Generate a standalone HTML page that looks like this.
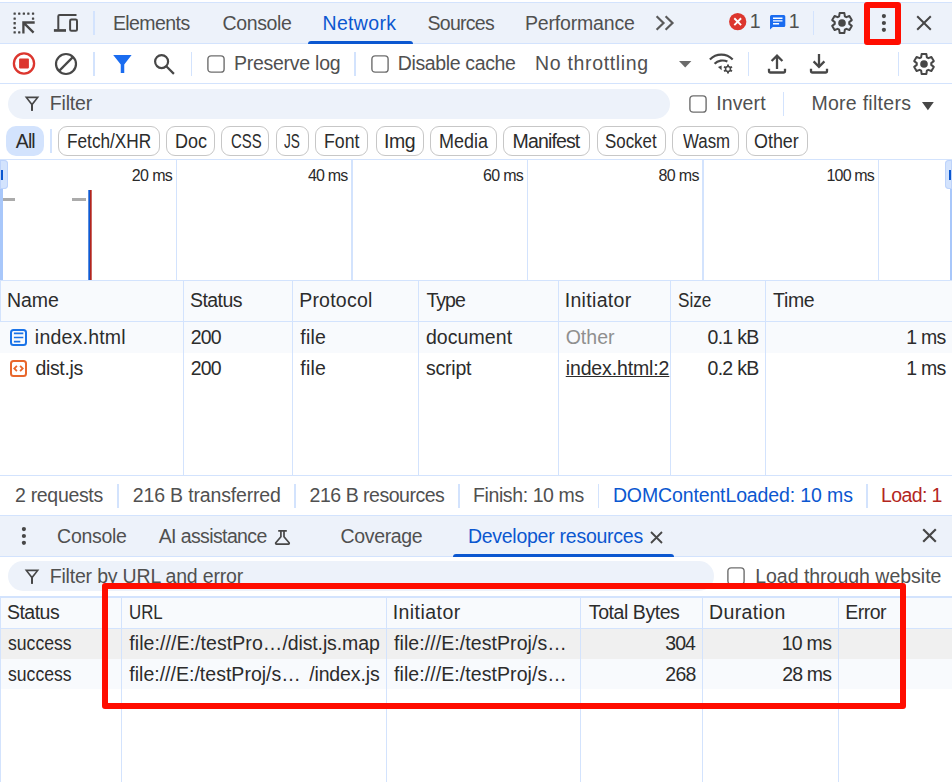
<!DOCTYPE html><html><head><meta charset="utf-8"><title>DevTools</title><style>
html,body{margin:0;padding:0;background:#fff;}
body{width:952px;height:782px;position:relative;overflow:hidden;font-family:"Liberation Sans",sans-serif;font-size:19.500px;color:#505050;}
.a{position:absolute;}
.t{position:absolute;white-space:nowrap;line-height:20px;height:20px;}
.bg{position:absolute;left:0;width:952px;}
.hl{position:absolute;left:0;width:952px;height:1px;background:#d3e3fd;}
.vl{position:absolute;width:1px;background:#d3e3fd;}
.chip{position:absolute;box-sizing:border-box;border:1px solid #c7c7c7;border-radius:9px;top:126px;height:30px;background:#fff;}
.cb{position:absolute;box-sizing:border-box;width:18px;height:18px;border:1.500px solid #6e6e6e;border-radius:3.500px;background:#fff;}
svg{position:absolute;overflow:visible;}
</style></head><body>
<!-- ===== top tab bar ===== -->
<div class="hl" style="top:2px"></div>
<div class="bg" style="top:3px;height:40px;background:#edf2fa"></div>
<div class="hl" style="top:43px"></div>
<!-- inspect icon -->
<svg style="left:13px;top:12px" width="22" height="22" viewBox="0 0 22 22"><g fill="#474747"><rect x="0.5" y="0.5" width="2.3" height="2.3" rx="0.5"/><rect x="5.1" y="0.5" width="2.3" height="2.3" rx="0.5"/><rect x="9.7" y="0.5" width="2.3" height="2.3" rx="0.5"/><rect x="14.2" y="0.5" width="2.3" height="2.3" rx="0.5"/><rect x="18.9" y="0.5" width="2.3" height="2.3" rx="0.5"/><rect x="0.5" y="5.5" width="2.3" height="2.3" rx="0.5"/><rect x="0.5" y="10.1" width="2.3" height="2.3" rx="0.5"/><rect x="0.5" y="14.7" width="2.3" height="2.3" rx="0.5"/><rect x="0.5" y="19.2" width="2.3" height="2.3" rx="0.5"/><rect x="18.9" y="5.5" width="2.3" height="2.3" rx="0.5"/><rect x="5.1" y="19.2" width="2.3" height="2.3" rx="0.5"/></g><path d="M10.400 21.600V10.500H21.700M11 11.100L20.600 20.600" fill="none" stroke="#474747" stroke-width="2.300"/></svg>
<!-- device icon -->
<svg style="left:53px;top:13px" width="26" height="20" viewBox="0 0 26 20"><path d="M23.5 2H6.6Q5.3 2 5.300 3.300V16.500" fill="none" stroke="#474747" stroke-width="2"/><rect x="0.900" y="16.100" width="12.100" height="2.700" fill="#474747"/><rect x="17.100" y="6.600" width="6.900" height="11.200" rx="1.300" fill="none" stroke="#474747" stroke-width="2"/></svg>
<div class="vl" style="left:93px;top:11px;height:24px;width:2px"></div>
<!-- network underline -->
<div class="a" style="left:307.700px;top:41px;width:105.300px;height:3px;background:#0b57d0;border-radius:3px 3px 0 0"></div>
<!-- chevrons -->
<svg style="left:655px;top:15px" width="20" height="16" viewBox="0 0 20 16"><path d="M1.600 1.300L8.500 8L1.600 14.700M10.600 1.300L17.500 8L10.600 14.700" fill="none" stroke="#5a5a5a" stroke-width="2.200"/></svg>
<!-- error badge -->
<svg style="left:728.900px;top:13px" width="18" height="18" viewBox="0 0 18 18"><circle cx="8.700" cy="8.650" r="8.650" fill="#dc362e"/><path d="M5.300 5.250L12.100 12.050M12.100 5.250L5.300 12.050" stroke="#fff" stroke-width="1.900"/></svg>
<!-- message badge -->
<svg style="left:769.900px;top:15px" width="16" height="15" viewBox="0 0 16 15"><path d="M0 1.500A1.500 1.500 0 0 1 1.500 0H13.800A1.500 1.500 0 0 1 15.300 1.500V10.500A1.500 1.500 0 0 1 13.800 12H2.800L0 14.600Z" fill="#1a6cf0"/><path d="M3 3.200H12.500M3 5.900H12.500M3 8.700H9.100" stroke="#fff" stroke-width="1.400"/></svg>
<div class="vl" style="left:813px;top:11px;height:24px;width:1px"></div>
<!-- gear top -->
<svg class="gear" style="left:830.1px;top:10.9px" width="24" height="24" viewBox="0 0 24 24"><path d="M14.85 5.28L14.38 2.08L9.62 2.08L9.15 5.28L7.61 6.17L4.60 4.98L2.22 9.10L4.75 11.11L4.75 12.89L2.22 14.90L4.60 19.02L7.61 17.83L9.15 18.72L9.62 21.92L14.38 21.92L14.85 18.72L16.39 17.83L19.40 19.02L21.78 14.90L19.25 12.89L19.25 11.11L21.78 9.10L19.40 4.98L16.39 6.17Z" fill="none" stroke="#474747" stroke-width="2" stroke-linejoin="round"/><circle cx="12" cy="12" r="3.8" fill="#474747"/></svg>
<!-- red box around kebab -->
<div class="a" style="left:864px;top:2px;width:37px;height:43px;box-sizing:border-box;border:6px solid #ff0d00;border-radius:3px"></div>
<svg style="left:881px;top:13px" width="6" height="20" viewBox="0 0 6 20"><circle cx="2.9" cy="3.1" r="2.1" fill="#474747"/><circle cx="2.9" cy="10" r="2.1" fill="#474747"/><circle cx="2.9" cy="16.8" r="2.1" fill="#474747"/></svg>
<svg style="left:916px;top:15px" width="16" height="16" viewBox="0 0 16 16"><path d="M1.2 1.2L14.8 14.8M14.8 1.2L1.2 14.8" stroke="#474747" stroke-width="2"/></svg>

<!-- ===== network toolbar ===== -->
<div class="hl" style="top:83px"></div>
<!-- record -->
<svg style="left:12.050px;top:52.450px" width="24" height="24" viewBox="0 0 24 24"><circle cx="12" cy="11.500" r="10.100" fill="none" stroke="#dc362e" stroke-width="2.300"/><rect x="7.100" y="6.600" width="9.800" height="9.800" rx="0.800" fill="#dc362e"/></svg>
<!-- clear -->
<svg style="left:54.950px;top:52.850px" width="22" height="22" viewBox="0 0 22 22"><circle cx="11" cy="11" r="10" fill="none" stroke="#474747" stroke-width="2.200"/><path d="M3.900 18.100L18.100 3.900" stroke="#474747" stroke-width="2.200"/></svg>
<div class="vl" style="left:93px;top:52px;height:24px;width:2px"></div>
<!-- funnel filled -->
<svg style="left:112.600px;top:55px" width="19" height="18" viewBox="0 0 19 18"><path d="M0.200 0H18.600L11.250 9.500V17.900H7.750V9.500Z" fill="#1a6cf0"/></svg>
<!-- search -->
<svg style="left:153.800px;top:54.200px" width="21" height="21" viewBox="0 0 21 21"><circle cx="7.600" cy="7.550" r="6.500" fill="none" stroke="#474747" stroke-width="2.200"/><path d="M12.300 12.300L19.900 19.900" stroke="#474747" stroke-width="2.200"/></svg>
<div class="vl" style="left:191px;top:52px;height:24px;width:1px"></div>
<svg style="left:207px;top:55px" width="18" height="18" viewBox="0 0 18 18"><rect x="0.900" y="0.900" width="16.200" height="16.200" rx="3.200" fill="#fff" stroke="#6e6e6e" stroke-width="1.400"/></svg>
<div class="vl" style="left:354px;top:52px;height:24px;width:2px"></div>
<svg style="left:371px;top:55px" width="18" height="18" viewBox="0 0 18 18"><rect x="0.900" y="0.900" width="16.200" height="16.200" rx="3.200" fill="#fff" stroke="#6e6e6e" stroke-width="1.400"/></svg>
<!-- dropdown arrow -->
<svg style="left:679px;top:60.5px" width="13" height="7" viewBox="0 0 13 7"><path d="M0 0H12.4L6.2 6.6Z" fill="#6b6b6b"/></svg>
<!-- wifi gear -->
<svg style="left:709px;top:53px" width="25" height="21" viewBox="0 0 25 21"><path d="M0.900 6.500C7.300 0.100 17.300 0.100 23.700 6.500M5.600 10.800C8.800 7.300 14.400 6.700 18.400 8.500" fill="none" stroke="#474747" stroke-width="2.200"/><path d="M8.900 14.100L12.600 12.400L12.600 17.300Z" fill="#474747"/><g transform="translate(19,16)"><path d="M0-4.600V4.600M-4-2.300L4 2.300M-4 2.300L4-2.300" stroke="#474747" stroke-width="1.900"/><circle r="3.200" fill="#474747"/><circle r="1.700" fill="#fff"/></g></svg>
<div class="vl" style="left:748px;top:52px;height:24px;width:1px"></div>
<!-- upload -->
<svg style="left:768px;top:53.5px" width="18" height="20" viewBox="0 0 18 20"><path d="M9 15V2M3.600 7L9 1.600L14.400 7M1 14.800V17a1.500 1.500 0 0 0 1.500 1.500H15.500a1.500 1.500 0 0 0 1.500-1.500V14.800" fill="none" stroke="#474747" stroke-width="2.300"/></svg>
<!-- download -->
<svg style="left:810px;top:53.5px" width="18" height="20" viewBox="0 0 18 20"><path d="M9 0V12.500M3.600 7.400L9 12.800L14.400 7.400M1 14.800V17a1.500 1.500 0 0 0 1.500 1.500H15.500a1.500 1.500 0 0 0 1.500-1.500V14.800" fill="none" stroke="#474747" stroke-width="2.300"/></svg>
<div class="vl" style="left:898px;top:52px;height:24px;width:1px"></div>
<svg class="gear" style="left:911.8px;top:51.6px" width="24" height="24" viewBox="0 0 24 24"><path d="M14.85 5.28L14.38 2.08L9.62 2.08L9.15 5.28L7.61 6.17L4.60 4.98L2.22 9.10L4.75 11.11L4.75 12.89L2.22 14.90L4.60 19.02L7.61 17.83L9.15 18.72L9.62 21.92L14.38 21.92L14.85 18.72L16.39 17.83L19.40 19.02L21.78 14.90L19.25 12.89L19.25 11.11L21.78 9.10L19.40 4.98L16.39 6.17Z" fill="none" stroke="#474747" stroke-width="2" stroke-linejoin="round"/><circle cx="12" cy="12" r="3.8" fill="#474747"/></svg>

<!-- ===== filter bar ===== -->
<div class="a" style="left:8px;top:89px;width:662px;height:30px;border-radius:15px;background:#edf2fa"></div>
<svg style="left:24px;top:96.400px" width="16" height="16" viewBox="0 0 16 16"><path d="M2.300 1.400H13.700L8 8.600Z" fill="none" stroke="#474747" stroke-width="1.600" stroke-linejoin="miter"/><rect x="7" y="7.500" width="2" height="7.400" fill="#474747"/></svg>
<svg style="left:689px;top:95px" width="18" height="18" viewBox="0 0 18 18"><rect x="0.900" y="0.900" width="16.200" height="16.200" rx="3.200" fill="#fff" stroke="#6e6e6e" stroke-width="1.400"/></svg>
<div class="vl" style="left:783px;top:92px;height:24px;width:1px"></div>
<svg style="left:921.600px;top:101.900px" width="12" height="9" viewBox="0 0 12 9"><path d="M0 0H11.800L5.900 8.300Z" fill="#474747"/></svg>

<!-- ===== chips ===== -->
<div class="a" style="left:6px;top:126px;width:38px;height:30px;border-radius:10px;background:#d3e3fd"></div>
<div class="vl" style="left:50px;top:129px;height:24px;width:2px"></div>
<div class="chip" style="left:58px;width:102px"></div>
<div class="chip" style="left:166px;width:48.500px"></div>
<div class="chip" style="left:221px;width:48px"></div>
<div class="chip" style="left:275.500px;width:33px"></div>
<div class="chip" style="left:315px;width:53px"></div>
<div class="chip" style="left:375.500px;width:48px"></div>
<div class="chip" style="left:430px;width:66.500px"></div>
<div class="chip" style="left:503px;width:86.500px"></div>
<div class="chip" style="left:596.500px;width:69.500px"></div>
<div class="chip" style="left:672px;width:66.500px"></div>
<div class="chip" style="left:745.500px;width:62.500px"></div>
<div class="hl" style="top:159px"></div>

<!-- ===== overview ===== -->
<div class="vl" style="left:176px;top:160px;height:120px"></div>
<div class="vl" style="left:351px;top:160px;height:120px;width:2px"></div>
<div class="vl" style="left:527px;top:160px;height:120px"></div>
<div class="vl" style="left:702px;top:160px;height:120px;width:2px"></div>
<div class="vl" style="left:878px;top:160px;height:120px"></div>
<div class="a" style="left:0;top:160px;width:3px;height:120px;background:#a8c7fa"></div>
<div class="a" style="left:950px;top:160px;width:2px;height:120px;background:#a8c7fa"></div>
<div class="a" style="left:0;top:160px;width:8px;height:29px;background:#d3e3fd;border-radius:0 4px 4px 0;box-shadow:inset 0 0 0 1px #bdd3fb"></div>
<div class="a" style="left:1px;top:169.500px;width:2px;height:10px;background:#0b57d0"></div>
<div class="a" style="left:945px;top:160px;width:7px;height:29px;background:#d3e3fd;border-radius:4px 0 0 4px;box-shadow:inset 0 0 0 1px #bdd3fb"></div>
<div class="a" style="left:949px;top:169.500px;width:2px;height:10px;background:#0b57d0"></div>
<div class="a" style="left:3px;top:198px;width:12px;height:3px;background:#ababab"></div>
<div class="a" style="left:72px;top:198px;width:14px;height:3px;background:#ababab"></div>
<svg style="left:88px;top:190px" width="4" height="90" viewBox="0 0 4 90"><rect x="0.300" y="0" width="1.700" height="90" fill="#0f5ad3"/><rect x="2" y="0" width="1.700" height="90" fill="#b3261e"/></svg>

<div class="hl" style="top:280px"></div>

<!-- ===== network table ===== -->
<div class="bg" style="top:281px;height:40px;background:#f8fafd"></div>
<div class="hl" style="top:321px"></div>
<div class="bg" style="top:322px;height:31px;background:#f8fafd"></div>
<div class="vl" style="left:183px;top:281px;height:194px"></div>
<div class="vl" style="left:292px;top:281px;height:194px"></div>
<div class="vl" style="left:418px;top:281px;height:194px"></div>
<div class="vl" style="left:558px;top:281px;height:194px"></div>
<div class="vl" style="left:670px;top:281px;height:194px"></div>
<div class="vl" style="left:765px;top:281px;height:194px"></div>
<div class="vl" style="left:0;top:281px;height:40px"></div>
<!-- doc icon -->
<svg style="left:9.500px;top:328.500px" width="17" height="17" viewBox="0 0 17 17"><rect x="1" y="1" width="15" height="15" rx="2.500" fill="none" stroke="#1a73e8" stroke-width="2"/><path d="M3.900 4.300H13.300M3.900 8.500H13.300M3.900 12.600H10.300" stroke="#1a73e8" stroke-width="1.700"/></svg>
<!-- script icon -->
<svg style="left:9.600px;top:360.300px" width="17" height="17" viewBox="0 0 17 17"><rect x="1" y="1" width="15" height="15" rx="2.500" fill="none" stroke="#e8672c" stroke-width="2"/><path d="M6.900 5.900L4.300 8.500L6.900 11.100M10.100 5.900L12.700 8.500L10.100 11.100" fill="none" stroke="#e8672c" stroke-width="1.800"/></svg>
<div class="hl" style="top:475px"></div>

<!-- ===== status bar ===== -->
<div class="vl" style="left:117px;top:484px;height:24px;width:2px"></div>
<div class="vl" style="left:294px;top:484px;height:24px;width:2px"></div>
<div class="vl" style="left:458px;top:484px;height:24px;width:2px"></div>
<div class="vl" style="left:598px;top:484px;height:24px;width:1px"></div>
<div class="vl" style="left:866px;top:484px;height:24px;width:2px"></div>
<div class="hl" style="top:515px"></div>

<!-- ===== drawer tab bar ===== -->
<div class="bg" style="top:516px;height:40px;background:#edf2fa"></div>
<div class="hl" style="top:556px"></div>
<svg style="left:21.100px;top:526px" width="6" height="20" viewBox="0 0 6 20"><circle cx="2.900" cy="3.100" r="2.100" fill="#474747"/><circle cx="2.900" cy="10" r="2.100" fill="#474747"/><circle cx="2.900" cy="16.800" r="2.100" fill="#474747"/></svg>
<!-- flask -->
<svg style="left:274px;top:529px" width="17" height="17" viewBox="0 0 17 17"><path d="M4.200 1.900H12.800M6.900 1.900V7.800L1.800 13.800A0.900 0.900 0 0 0 2.500 15.200H14.400A0.900 0.900 0 0 0 15.100 13.800L10 7.800V1.900" fill="none" stroke="#474747" stroke-width="1.700" stroke-linejoin="round"/></svg>
<div class="a" style="left:452.800px;top:554px;width:221px;height:3px;background:#0b57d0;border-radius:3px 3px 0 0"></div>
<svg style="left:649.500px;top:530.500px" width="13" height="13" viewBox="0 0 13 13"><path d="M1 1L12 12M12 1L1 12" stroke="#474747" stroke-width="1.800"/></svg>
<svg style="left:921.550px;top:528.400px" width="15" height="15" viewBox="0 0 15 15"><path d="M1.200 1.200L13.800 13.800M13.800 1.200L1.200 13.800" stroke="#474747" stroke-width="2.200"/></svg>

<!-- ===== drawer filter ===== -->
<div class="a" style="left:8px;top:561px;width:706px;height:30px;border-radius:15px;background:#edf2fa"></div>
<svg style="left:24px;top:568.600px" width="16" height="16" viewBox="0 0 16 16"><path d="M2.300 1.400H13.700L8 8.600Z" fill="none" stroke="#474747" stroke-width="1.600" stroke-linejoin="miter"/><rect x="7" y="7.500" width="2" height="7.400" fill="#474747"/></svg>
<svg style="left:727px;top:567px" width="18" height="18" viewBox="0 0 18 18"><rect x="0.900" y="0.900" width="16.200" height="16.200" rx="3.200" fill="#fff" stroke="#6e6e6e" stroke-width="1.400"/></svg>

<!-- ===== developer resources table ===== -->
<div class="bg" style="top:597px;height:31px;background:#f8fafd"></div>
<div class="bg" style="top:629px;height:30px;background:#f0f0f0"></div>
<div class="bg" style="top:659px;height:30px;background:#f8fafd"></div>
<div class="hl" style="top:596.300px;height:1.500px"></div>
<div class="hl" style="top:628px"></div>
<div class="vl" style="left:0px;top:596px;height:186px"></div>
<div class="vl" style="left:121px;top:597px;height:185px"></div>
<div class="vl" style="left:386px;top:597px;height:185px"></div>
<div class="vl" style="left:580px;top:597px;height:185px"></div>
<div class="vl" style="left:702px;top:597px;height:185px"></div>
<div class="vl" style="left:838px;top:597px;height:185px"></div>

<span class="t" style="top:13px;color:#505050;left:112.93px;letter-spacing:-0.578px;">Elements</span>
<span class="t" style="top:13px;color:#505050;left:222.50px;letter-spacing:-0.366px;">Console</span>
<span class="t" style="top:13px;color:#0b57d0;left:322.47px;letter-spacing:0.340px;">Network</span>
<span class="t" style="top:13px;color:#505050;left:427.59px;letter-spacing:-0.742px;">Sources</span>
<span class="t" style="top:13px;color:#505050;left:524.93px;letter-spacing:-0.172px;">Performance</span>
<span class="t" style="top:11px;color:#505050;left:749.87px;">1</span>
<span class="t" style="top:11px;color:#505050;left:788.87px;">1</span>
<span class="t" style="top:53px;color:#505050;left:233.89px;letter-spacing:-0.249px;">Preserve log</span>
<span class="t" style="top:53px;color:#505050;left:397.73px;letter-spacing:-0.363px;">Disable cache</span>
<span class="t" style="top:53px;color:#505050;left:535.06px;letter-spacing:0.666px;">No throttling</span>
<span class="t" style="top:93px;color:#505050;left:49.72px;letter-spacing:-0.157px;">Filter</span>
<span class="t" style="top:93px;color:#505050;left:716.16px;letter-spacing:0.129px;">Invert</span>
<span class="t" style="top:93px;color:#505050;left:811.39px;letter-spacing:0.283px;">More filters</span>
<span class="t" style="top:131px;color:#2c2c2c;left:15.84px;letter-spacing:-0.902px;">All</span>
<span class="t" style="top:131px;color:#2c2c2c;left:67.22px;transform:scaleX(0.8835);transform-origin:left center;">Fetch/XHR</span>
<span class="t" style="top:131px;color:#2c2c2c;left:174.97px;transform:scaleX(0.9228);transform-origin:left center;">Doc</span>
<span class="t" style="top:131px;color:#2c2c2c;left:230.65px;transform:scaleX(0.7655);transform-origin:left center;">CSS</span>
<span class="t" style="top:131px;color:#2c2c2c;left:284.09px;transform:scaleX(0.6987);transform-origin:left center;">JS</span>
<span class="t" style="top:131px;color:#2c2c2c;left:323.62px;transform:scaleX(0.9078);transform-origin:left center;">Font</span>
<span class="t" style="top:131px;color:#2c2c2c;left:383.92px;letter-spacing:-0.435px;">Img</span>
<span class="t" style="top:131px;color:#2c2c2c;left:438.96px;transform:scaleX(0.9201);transform-origin:left center;">Media</span>
<span class="t" style="top:131px;color:#2c2c2c;left:512.56px;letter-spacing:-0.854px;">Manifest</span>
<span class="t" style="top:131px;color:#2c2c2c;left:605.26px;transform:scaleX(0.8665);transform-origin:left center;">Socket</span>
<span class="t" style="top:131px;color:#2c2c2c;left:682.79px;transform:scaleX(0.8644);transform-origin:left center;">Wasm</span>
<span class="t" style="top:131px;color:#2c2c2c;left:754.32px;transform:scaleX(0.9176);transform-origin:left center;">Other</span>
<span class="t" style="top:166px;color:#2a2a2a;font-size:16px;left:131.86px;letter-spacing:-0.640px;">20 ms</span>
<span class="t" style="top:166px;color:#2a2a2a;font-size:16px;left:307.89px;letter-spacing:-0.771px;">40 ms</span>
<span class="t" style="top:166px;color:#2a2a2a;font-size:16px;left:482.96px;letter-spacing:-0.667px;">60 ms</span>
<span class="t" style="top:166px;color:#2a2a2a;font-size:16px;left:658.50px;letter-spacing:-0.673px;">80 ms</span>
<span class="t" style="top:166px;color:#2a2a2a;font-size:16px;left:826.53px;letter-spacing:-0.826px;">100 ms</span>
<span class="t" style="top:290px;color:#2c2c2c;left:7.06px;letter-spacing:-0.081px;">Name</span>
<span class="t" style="top:290px;color:#2c2c2c;left:189.94px;letter-spacing:-0.557px;">Status</span>
<span class="t" style="top:290px;color:#2c2c2c;left:299.15px;letter-spacing:0.242px;">Protocol</span>
<span class="t" style="top:290px;color:#2c2c2c;left:426.38px;letter-spacing:-0.971px;">Type</span>
<span class="t" style="top:290px;color:#2c2c2c;left:564.68px;letter-spacing:0.330px;">Initiator</span>
<span class="t" style="top:290px;color:#2c2c2c;left:678.17px;transform:scaleX(0.8800);transform-origin:left center;">Size</span>
<span class="t" style="top:290px;color:#2c2c2c;left:773.09px;letter-spacing:-0.324px;">Time</span>
<span class="t" style="top:327px;color:#2c2c2c;left:34.86px;letter-spacing:0.213px;">index.html</span>
<span class="t" style="top:327px;color:#2c2c2c;left:190.78px;letter-spacing:-0.893px;">200</span>
<span class="t" style="top:327px;color:#2c2c2c;left:300.26px;letter-spacing:0.217px;">file</span>
<span class="t" style="top:327px;color:#2c2c2c;left:425.96px;letter-spacing:0.067px;">document</span>
<span class="t" style="top:327px;color:#8f8f8f;left:565.65px;letter-spacing:0.019px;">Other</span>
<span class="t" style="top:327px;color:#2c2c2c;left:707.58px;letter-spacing:-0.738px;">0.1 kB</span>
<span class="t" style="top:327px;color:#2c2c2c;left:906.26px;letter-spacing:-0.727px;">1 ms</span>
<span class="t" style="top:358px;color:#2c2c2c;left:35.40px;letter-spacing:-0.339px;">dist.js</span>
<span class="t" style="top:358px;color:#2c2c2c;left:190.78px;letter-spacing:-0.893px;">200</span>
<span class="t" style="top:358px;color:#2c2c2c;left:300.26px;letter-spacing:0.217px;">file</span>
<span class="t" style="top:358px;color:#2c2c2c;left:425.97px;letter-spacing:-0.223px;">script</span>
<span class="t" style="top:358px;color:#2c2c2c;left:565.74px;letter-spacing:-0.134px;text-decoration:underline;text-decoration-thickness:1px;text-underline-offset:1px;text-decoration-skip-ink:none;">index.html:2</span>
<span class="t" style="top:358px;color:#2c2c2c;left:707.58px;letter-spacing:-0.738px;">0.2 kB</span>
<span class="t" style="top:358px;color:#2c2c2c;left:906.26px;letter-spacing:-0.727px;">1 ms</span>
<span class="t" style="top:485px;color:#505050;left:15.10px;letter-spacing:-0.331px;">2 requests</span>
<span class="t" style="top:485px;color:#505050;left:132.82px;letter-spacing:-0.165px;">216 B transferred</span>
<span class="t" style="top:485px;color:#505050;left:309.61px;letter-spacing:-0.482px;">216 B resources</span>
<span class="t" style="top:485px;color:#505050;left:473.06px;letter-spacing:-0.403px;">Finish: 10 ms</span>
<span class="t" style="top:485px;color:#0b57d0;left:612.89px;letter-spacing:-0.125px;">DOMContentLoaded: 10 ms</span>
<span class="t" style="top:485px;color:#b3261e;left:881.06px;letter-spacing:-0.622px;">Load: 1</span>
<span class="t" style="top:526px;color:#505050;left:57.10px;letter-spacing:-0.300px;">Console</span>
<span class="t" style="top:526px;color:#505050;left:158.64px;letter-spacing:-0.604px;">AI assistance</span>
<span class="t" style="top:526px;color:#505050;left:340.53px;letter-spacing:-0.352px;">Coverage</span>
<span class="t" style="top:526px;color:#0b57d0;left:467.89px;letter-spacing:-0.258px;">Developer resources</span>
<span class="t" style="top:566px;color:#505050;left:49.72px;letter-spacing:-0.188px;">Filter by URL and error</span>
<span class="t" style="top:566px;color:#505050;left:755.15px;letter-spacing:-0.012px;">Load through website</span>
<span class="t" style="top:602px;color:#2c2c2c;left:6.94px;letter-spacing:-0.510px;">Status</span>
<span class="t" style="top:602px;color:#2c2c2c;left:128.60px;transform:scaleX(0.8645);transform-origin:left center;">URL</span>
<span class="t" style="top:602px;color:#2c2c2c;left:392.64px;letter-spacing:0.460px;">Initiator</span>
<span class="t" style="top:602px;color:#2c2c2c;left:588.84px;letter-spacing:-0.437px;">Total Bytes</span>
<span class="t" style="top:602px;color:#2c2c2c;left:709.06px;letter-spacing:0.366px;">Duration</span>
<span class="t" style="top:602px;color:#2c2c2c;left:845.22px;letter-spacing:-0.500px;">Error</span>
<span class="t" style="top:633px;color:#2c2c2c;left:7.90px;transform:scaleX(0.9027);transform-origin:left center;">success</span>
<span class="t" style="top:633px;color:#2c2c2c;left:129.27px;letter-spacing:0.075px;">file:///E:/testPro…</span>
<span class="t" style="top:633px;color:#2c2c2c;left:282.40px;letter-spacing:-0.116px;">/dist.js.map</span>
<span class="t" style="top:633px;color:#2c2c2c;left:394.06px;letter-spacing:0.073px;">file:///E:/testProj/s…</span>
<span class="t" style="top:633px;color:#2c2c2c;left:665.26px;letter-spacing:-0.951px;">304</span>
<span class="t" style="top:633px;color:#2c2c2c;left:781.70px;letter-spacing:-0.725px;">10 ms</span>
<span class="t" style="top:664px;color:#2c2c2c;left:7.90px;transform:scaleX(0.9027);transform-origin:left center;">success</span>
<span class="t" style="top:664px;color:#2c2c2c;left:129.27px;letter-spacing:0.015px;">file:///E:/testProj/s…</span>
<span class="t" style="top:664px;color:#2c2c2c;left:309.14px;letter-spacing:-0.125px;">/index.js</span>
<span class="t" style="top:664px;color:#2c2c2c;left:394.06px;letter-spacing:0.073px;">file:///E:/testProj/s…</span>
<span class="t" style="top:664px;color:#2c2c2c;left:665.28px;letter-spacing:-0.722px;">268</span>
<span class="t" style="top:664px;color:#2c2c2c;left:782.21px;letter-spacing:-0.852px;">28 ms</span>
<!-- red annotation box -->
<div class="a" style="left:102px;top:583px;width:804px;height:126px;box-sizing:border-box;border:6px solid #ff0d00;border-radius:3px"></div>

</body></html>
